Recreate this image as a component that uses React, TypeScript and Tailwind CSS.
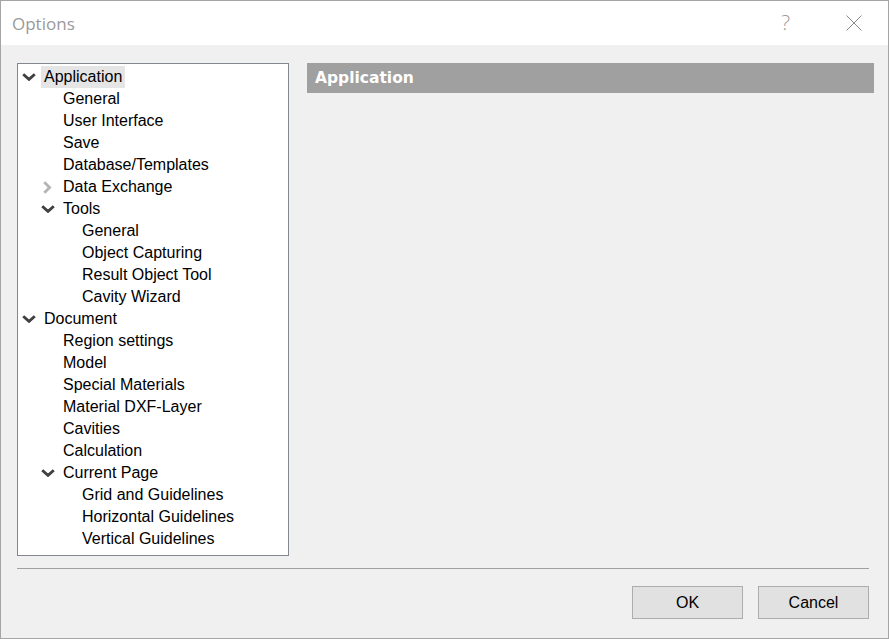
import React from "react";

type Item = { label: string; level: number; state?: "open" | "closed"; selected?: boolean };

const items: Item[] = [
  { label: "Application", level: 0, state: "open", selected: true },
  { label: "General", level: 1 },
  { label: "User Interface", level: 1 },
  { label: "Save", level: 1 },
  { label: "Database/Templates", level: 1 },
  { label: "Data Exchange", level: 1, state: "closed" },
  { label: "Tools", level: 1, state: "open" },
  { label: "General", level: 2 },
  { label: "Object Capturing", level: 2 },
  { label: "Result Object Tool", level: 2 },
  { label: "Cavity Wizard", level: 2 },
  { label: "Document", level: 0, state: "open" },
  { label: "Region settings", level: 1 },
  { label: "Model", level: 1 },
  { label: "Special Materials", level: 1 },
  { label: "Material DXF-Layer", level: 1 },
  { label: "Cavities", level: 1 },
  { label: "Calculation", level: 1 },
  { label: "Current Page", level: 1, state: "open" },
  { label: "Grid and Guidelines", level: 2 },
  { label: "Horizontal Guidelines", level: 2 },
  { label: "Vertical Guidelines", level: 2 },
];

function Chevron({ state }: { state?: "open" | "closed" }) {
  if (state === "open") {
    return (
      <svg width="14" height="8" viewBox="0 0 14 8" className="block">
        <path d="M1.2 1.2 L7 6.4 L12.8 1.2" fill="none" stroke="#404040" strokeWidth="2.8" />
      </svg>
    );
  }
  if (state === "closed") {
    return (
      <svg width="9" height="13" viewBox="0 0 9 13" className="block ml-[2px]">
        <path d="M1.3 1.2 L6.6 6.5 L1.3 11.8" fill="none" stroke="#b4b4b4" strokeWidth="2.8" />
      </svg>
    );
  }
  return null;
}

function Row({ item }: { item: Item }) {
  const pl = item.level === 0 ? "pl-[4px]" : item.level === 1 ? "pl-[23px]" : "pl-[42px]";
  return (
    <div className={`flex items-center h-[22px] ${pl}`}>
      <div className="w-[19px] h-[22px] flex items-center">
        <Chevron state={item.state} />
      </div>
      <span
        className={`px-[3px] h-[22px] leading-[22px] whitespace-nowrap ${
          item.selected ? "bg-[#e5e5e5]" : ""
        }`}
      >
        {item.label}
      </span>
    </div>
  );
}

export default function App() {
  return (
    <div className="relative w-[889px] h-[639px] border border-[#a5a5a5] bg-[#f0f0f0] flex flex-col overflow-hidden">
      {/* edge marks */}
      <div className="absolute left-[-1px] top-[133px] w-[1px] h-[5px] bg-[#d02828]" />
      <div className="absolute left-[-1px] top-[138px] w-[1px] h-[171px] bg-[#a8a87a]" />
      <div className="absolute left-[-1px] top-[309px] w-[1px] h-[5px] bg-[#3030d8]" />
      <div className="absolute right-[-1px] top-[133px] w-[1px] h-[5px] bg-[#d02828]" />
      <div className="absolute right-[-1px] top-[138px] w-[1px] h-[171px] bg-[#a8a87a]" />
      <div className="absolute right-[-1px] top-[309px] w-[1px] h-[5px] bg-[#3030d8]" />

      {/* title bar */}
      <div className="h-[44px] bg-white flex items-center pl-[11px] pr-[26px] shrink-0">
        <span className="text-[17px] text-[#999999] font-['Open_Sans',sans-serif] leading-none">
          Options
        </span>
        <div className="flex-1" />
        <span className="text-[21px] text-[#9a9a9a] font-['Open_Sans',sans-serif] font-light leading-none mr-[56px] -mt-[1px]">
          ?
        </span>
        <svg width="16" height="16" viewBox="0 0 16 16" className="block">
          <path d="M0.5 0.5 L15.5 15.5 M15.5 0.5 L0.5 15.5" stroke="#8a8a8a" strokeWidth="1" fill="none" />
        </svg>
      </div>

      {/* content */}
      <div className="flex pt-[18px] pl-[16px] pr-[14px] gap-[18px] font-['Liberation_Sans',Arial,sans-serif] text-[16px] text-black">
        <div className="w-[272px] h-[493px] bg-white border border-[#828790] pt-[2px] overflow-hidden">
          {items.map((it, i) => (
            <Row key={i} item={it} />
          ))}
        </div>
        <div className="flex-1">
          <div className="h-[30px] bg-[#a0a0a0] flex items-center pl-[8px]">
            <span className="text-white font-bold text-[15.5px] font-['DejaVu_Sans',Verdana,sans-serif] leading-none mt-[1px]">
              Application
            </span>
          </div>
        </div>
      </div>

      {/* separator */}
      <div className="ml-[16px] mr-[19px] mt-[12px] h-[1px] bg-[#a0a0a0]" />

      {/* buttons */}
      <div className="flex justify-end gap-[15px] mt-[17px] mr-[19px] font-['Liberation_Sans',Arial,sans-serif] text-[16px] text-black">
        <button className="w-[111px] h-[33px] bg-[#e1e1e1] border border-[#adadad] leading-none">OK</button>
        <button className="w-[111px] h-[33px] bg-[#e1e1e1] border border-[#adadad] leading-none">Cancel</button>
      </div>
    </div>
  );
}
